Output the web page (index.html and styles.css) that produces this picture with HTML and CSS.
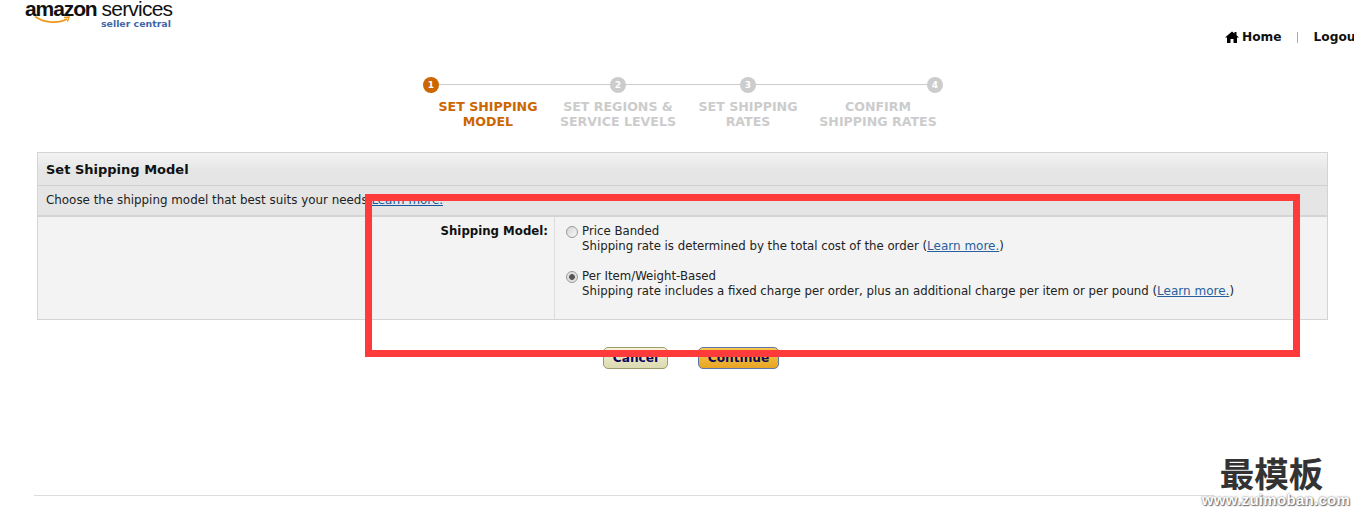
FILE: index.html
```html
<!DOCTYPE html>
<html lang="en">
<head>
<meta charset="utf-8">
<title>Set Shipping Model</title>
<link rel="stylesheet" href="styles.css">
</head>
<body>
<div class="page">
  <header class="top">
    <a class="logo" href="#">
      <span class="logo-row"><span class="logo-amazon">amazon</span><span class="logo-services">services</span></span>
      <svg class="logo-smile" width="38" height="10" viewBox="0 0 38 10"><path d="M1 1.500C10 8 24 9 33 4" fill="none" stroke="#f09a1a" stroke-width="1.800"/><path d="M30 2.500l5-.5-1.500 4.500" fill="none" stroke="#f09a1a" stroke-width="1.400"/></svg>
      <span class="logo-sub">seller central</span>
    </a>
    <nav class="nav">
      <a class="nav-link" href="#"><svg class="home-icon" width="14" height="12" viewBox="0 0 14 12"><path d="M7 .5L0 6.500h2V12h3.500V8h3v4H12V6.500h2L11.500 4.300V1h-2v1.600z"/></svg>Home</a>
      <span class="nav-sep"></span>
      <a class="nav-link" href="#">Logout</a>
    </nav>
  </header>

  <ol class="steps">
    <li class="step step-first active"><span class="dot">1</span><span class="step-label">SET SHIPPING<br>MODEL</span></li>
    <li class="step"><span class="dot">2</span><span class="step-label">SET REGIONS &amp;<br>SERVICE LEVELS</span></li>
    <li class="step"><span class="dot">3</span><span class="step-label">SET SHIPPING<br>RATES</span></li>
    <li class="step step-last"><span class="dot">4</span><span class="step-label">CONFIRM<br>SHIPPING RATES</span></li>
  </ol>

  <section class="panel">
    <div class="panel-head">
      <h2 class="panel-title">Set Shipping Model</h2>
      <p class="panel-desc">Choose the shipping model that best suits your needs <a href="#">Learn more.</a></p>
    </div>
    <div class="panel-body">
      <div class="field-label">Shipping Model:</div>
      <div class="field-options">
        <label class="option">
          <input type="radio" name="model">
          <span>Price Banded<br>Shipping rate is determined by the total cost of the order (<a href="#">Learn more.</a>)</span>
        </label>
        <label class="option">
          <input type="radio" name="model" checked>
          <span>Per Item/Weight-Based<br>Shipping rate includes a fixed charge per order, plus an additional charge per item or per pound (<a href="#">Learn more.</a>)</span>
        </label>
      </div>
    </div>
  </section>

  <div class="actions">
    <button class="btn btn-cancel" type="button">Cancel</button>
    <button class="btn btn-continue" type="button">Continue</button>
  </div>

  <footer class="foot"></footer>

  <div class="annotation"></div>
  <div class="watermark"><div class="wm-cn">最模板</div><div class="wm-en">www.zuimoban.com</div></div>
</div>
</body>
</html>
```
FILE: styles.css
```css
html, body { margin: 0; padding: 0; background: #fff; }
body { font-family: "DejaVu Sans", Verdana, sans-serif; font-size: 12px; color: #111; }
.page { position: relative; width: 1354px; height: 510px; overflow: hidden; }
a { color: #14579c; }

.top { display: flex; justify-content: space-between; height: 77px; padding-left: 25px; }
.logo { display: block; position: relative; width: 150px; height: 30px; text-decoration: none; }
.logo-row { display: flex; gap: 5px; align-items: baseline; height: 22px; line-height: 22px; margin-top: -2px; color: #111; white-space: nowrap; font-family: "Liberation Sans", Arial, sans-serif; }
.logo-amazon { font-size: 21px; font-weight: 700; letter-spacing: -1.100px; }
.logo-services { font-size: 21px; letter-spacing: -0.800px; }
.logo-smile { position: absolute; left: 9px; top: 15px; }
.logo-sub { position: absolute; left: 76px; top: 18px; font: 700 9.400px/12px "DejaVu Sans", sans-serif; color: #3f67a8; white-space: nowrap; }

.nav { display: flex; align-items: center; height: 14px; margin-top: 30px; width: 129px; flex: none; white-space: nowrap; font-size: 12.200px; font-weight: 700; }
.nav-link { color: #111; text-decoration: none; display: inline-flex; align-items: center; }
.home-icon { margin-right: 3px; fill: #000; }
.nav-sep { width: 1px; height: 11px; background: #aaa; margin: 0 16px 0 15px; flex: none; }

.steps { position: relative; display: flex; list-style: none; margin: 0 0 0 423px; padding: 0; width: 520px; height: 75px; }
.steps::before { content: ""; position: absolute; left: 8px; right: 8px; top: 7px; height: 1px; background: #ccc; }
.step { position: relative; width: 130px; display: flex; flex-direction: column; align-items: center; color: #ccc; font-weight: 700; }
.step-first { align-items: flex-start; }
.step-last { align-items: flex-end; }
.dot { width: 16px; height: 16px; border-radius: 50%; background: #ccc; color: #fff; font-size: 9px; line-height: 16px; text-align: center; }
.step-label { align-self: stretch; text-align: center; font-size: 12.600px; line-height: 15px; margin-top: 6px; white-space: nowrap; }
.active { color: #c60; }
.active .dot { background: #c60; }

.panel { margin-left: 37px; width: 1291px; box-sizing: border-box; border: 1px solid #d4d4d4; background: #f3f3f3; }
.panel-head { background: #e5e5e5; border-bottom: 2px solid #d4d4d4; padding: 0 2px; }
.panel-title { margin: 0 -2px; padding: 0 8px; height: 32px; line-height: 33px; font-size: 13px; font-weight: 700; color: #111; border-bottom: 1px solid #d0d0d0; background: linear-gradient(#f3f3f3, #e5e5e5 60%); }
.panel-desc { margin: 0 -2px; padding: 0 8px; height: 29px; line-height: 28px; font-size: 11.900px; color: #222; white-space: nowrap; }
.panel-body { display: flex; height: 102px; }
.field-label { width: 516px; flex: none; box-sizing: border-box; padding: 7px 6px 0 0; text-align: right; font-weight: 700; line-height: 15px; font-size: 11.750px; }
.field-options { flex: 1; border-left: 1px solid #ddd; padding: 7px 0 0 11px; display: flex; flex-direction: column; gap: 15px; font-size: 11.750px; }
.option { display: flex; gap: 4px; line-height: 15px; color: #222; white-space: nowrap; }
.option a { font-size: 12px; color: #2a5f9e; }
.option input { appearance: none; width: 12px; height: 12px; margin: 2px 0 0; flex: none; border-radius: 50%; border: 1px solid #9a9a9a; box-sizing: border-box; background: linear-gradient(135deg, #d6d6d6, #f6f6f6); }
.option input:checked { background: radial-gradient(circle, #555 0 2.500px, #dcdcdc 3.200px, #eee 100%); }

.actions { display: flex; margin: 27px 0 0 603px; gap: 30px; }
.btn { height: 22px; padding: 0; border-radius: 5px; font: 700 12.200px/20px "DejaVu Sans", sans-serif; color: #0a0a5a; }
.btn-cancel { width: 65px; border: 1px solid #9c9a68; background: linear-gradient(#f4f3d8, #dcdab0); }
.btn-continue { width: 81px; border: 1px solid #5a78a8; background: linear-gradient(#f9c84e, #e8a524); }

.foot { margin: 126px 0 0 34px; width: 1180px; height: 1px; background: #ddd; }

.annotation { position: absolute; left: 365px; top: 194px; width: 935px; height: 163px; box-sizing: border-box; border: 7px solid #ff3a3a; }

.watermark { position: absolute; left: 1187px; top: 454px; width: 164px; text-align: center; }
.wm-cn { font: 700 34.500px/36px "Noto Sans CJK SC", sans-serif; color: #333; margin-left: 5px; }
.wm-en { font: 700 15px/16px "Liberation Sans", sans-serif; color: #fff; text-shadow: 0 0 2px #555, 1px 1px 1px #777; margin: 2px 0 0 14px; letter-spacing: .3px; }
```
